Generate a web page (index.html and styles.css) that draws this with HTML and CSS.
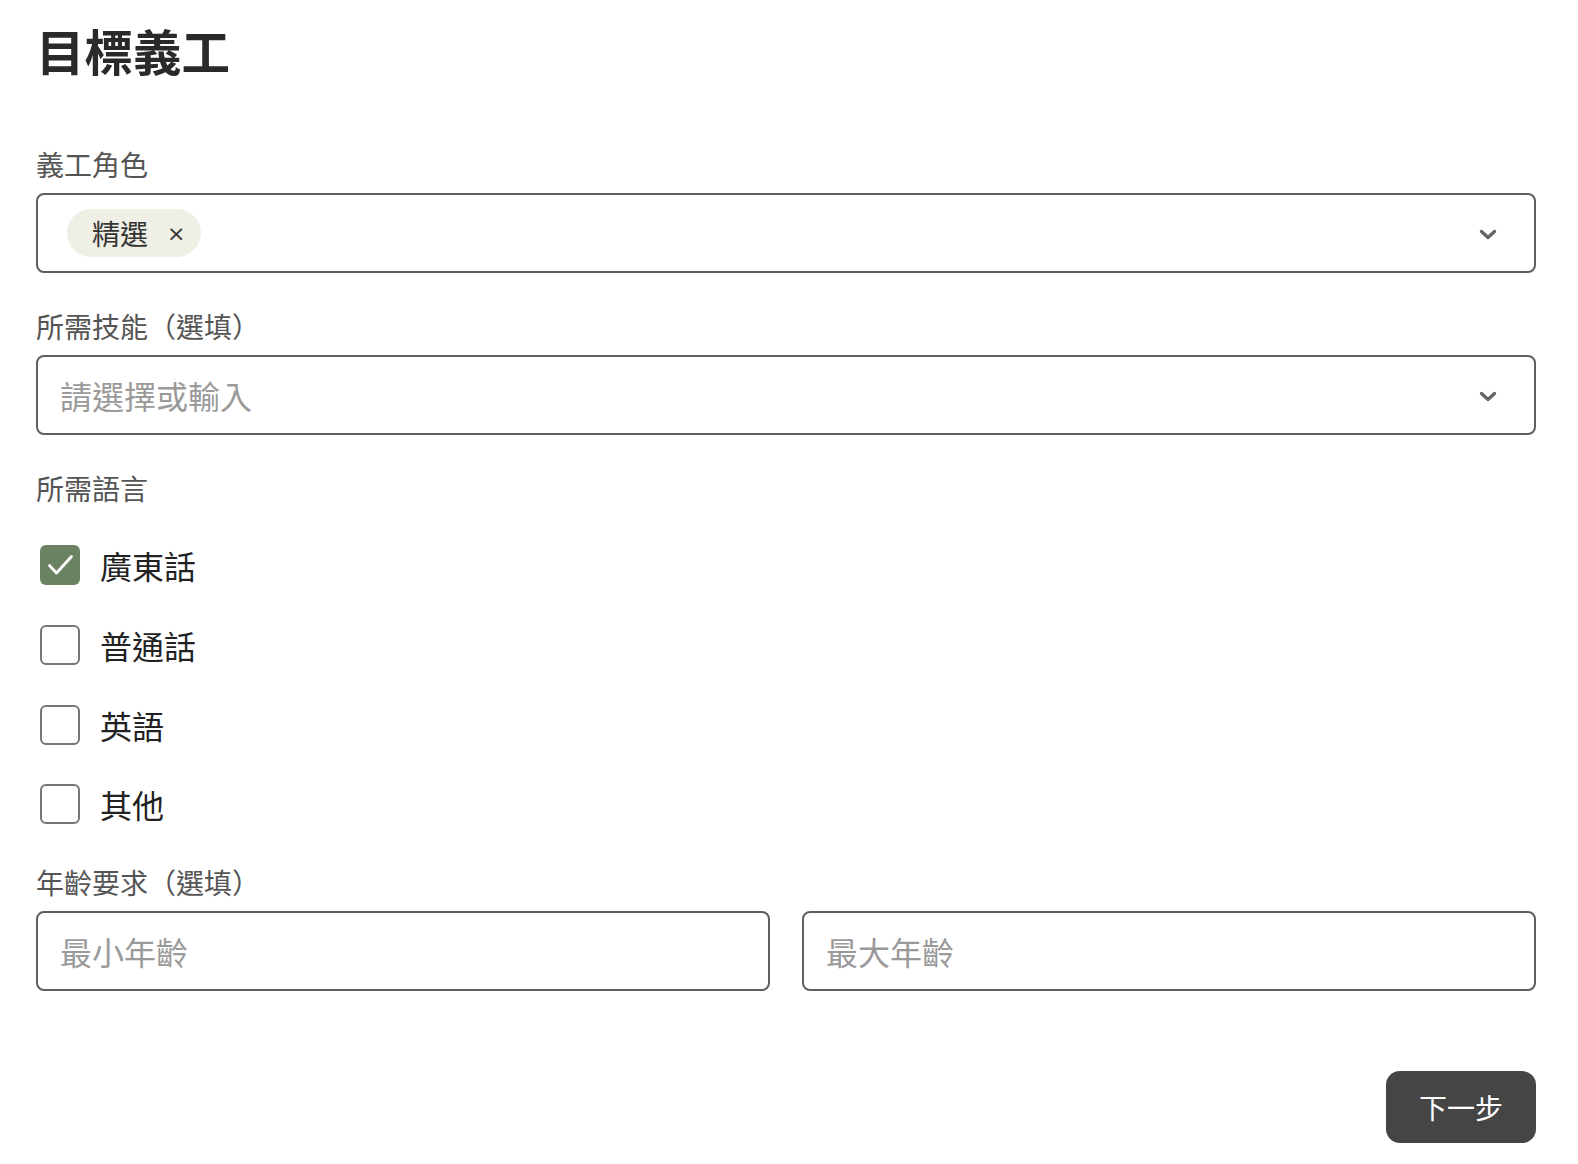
FILE: index.html
```html
<!DOCTYPE html>
<html lang="zh-Hant">
<head>
<meta charset="utf-8">
<title>目標義工</title>
<link rel="stylesheet" href="styles.css">
</head>
<body>
<main class="page">
  <h1 class="title">目標義工</h1>

  <section class="field first">
    <div class="label">義工角色</div>
    <div class="select">
      <div class="select-value">
        <span class="chip"><span class="chip-text">精選</span><span class="chip-x">×</span></span>
      </div>
      <svg class="chevron" viewBox="0 0 18 11" width="18" height="11"><path d="M2.5 2.5 L9 8.5 L15.5 2.5" fill="none" stroke="#666" stroke-width="3.4" stroke-linecap="round" stroke-linejoin="round"/></svg>
    </div>
  </section>

  <section class="field">
    <div class="label">所需技能（選填）</div>
    <div class="select">
      <div class="select-value placeholder">請選擇或輸入</div>
      <svg class="chevron" viewBox="0 0 18 11" width="18" height="11"><path d="M2.5 2.5 L9 8.5 L15.5 2.5" fill="none" stroke="#666" stroke-width="3.4" stroke-linecap="round" stroke-linejoin="round"/></svg>
    </div>
  </section>

  <section class="field">
    <div class="label">所需語言</div>
    <div class="checks">
      <label class="check">
        <span class="box checked"><svg viewBox="0 0 40 40" width="40" height="40"><path d="M9.5 20.5 L16.5 28 L31.5 11.5" fill="none" stroke="#fff" stroke-width="2.8" stroke-linecap="round" stroke-linejoin="round"/></svg></span>
        <span class="check-text">廣東話</span>
      </label>
      <label class="check"><span class="box"></span><span class="check-text">普通話</span></label>
      <label class="check"><span class="box"></span><span class="check-text">英語</span></label>
      <label class="check"><span class="box"></span><span class="check-text">其他</span></label>
    </div>
  </section>

  <section class="field age">
    <div class="label">年齡要求（選填）</div>
    <div class="age-row">
      <div class="input placeholder">最小年齡</div>
      <div class="input placeholder">最大年齡</div>
    </div>
  </section>

  <div class="actions">
    <button class="next">下一步</button>
  </div>
</main>
</body>
</html>
```

FILE: styles.css
```css
html, body {
  margin: 0;
  padding: 0;
  background: #ffffff;
}

body {
  font-family: "Noto Sans CJK TC", "Noto Sans", sans-serif;
  color: #222;
}

.page {
  padding: 20px 42px 0 36px;
}

.title {
  margin: 0;
  font-size: 48.5px;
  line-height: 60px;
  font-weight: 700;
  color: #2a2a2a;
}

.field {
  margin-top: 33px;
}

.field.first {
  margin-top: 64px;
}

.label {
  font-size: 28px;
  line-height: 40px;
  color: #555;
  margin-bottom: 9px;
}

.select {
  height: 80px;
  box-sizing: border-box;
  border: 2px solid #5f5f5f;
  border-radius: 8px;
  display: flex;
  align-items: center;
  justify-content: space-between;
  padding: 0 37px 0 22px;
}

.select-value {
  font-size: 32px;
  display: flex;
  align-items: center;
}

.placeholder {
  color: #9a9a9a;
}

.chip {
  margin-left: 7px;
  height: 48px;
  border-radius: 24px;
  background: #efefe6;
  display: inline-flex;
  align-items: center;
  padding: 0 16px 0 25px;
}

.chip-text {
  font-size: 28px;
  color: #333;
}

.chip-x {
  font-family: "DejaVu Sans", sans-serif;
  font-size: 22px;
  color: #333;
  margin-left: 19px;
}

.chevron {
  display: block;
  margin-top: 3px;
}

.checks {
  margin-top: 37px;
  display: flex;
  flex-direction: column;
  gap: 39.8px;
  padding-left: 4px;
}

.check {
  display: flex;
  align-items: center;
  height: 40px;
}

.box {
  width: 40px;
  height: 40px;
  box-sizing: border-box;
  border: 2px solid #777;
  border-radius: 6px;
  display: flex;
  align-items: center;
  justify-content: center;
  background: #fff;
  flex: none;
}

.box.checked {
  background: #6a8262;
  border: none;
}

.box.checked svg {
  display: block;
}

.check-text {
  margin-left: 20px;
  font-size: 32px;
  color: #222;
}

.field.age {
  margin-top: 38px;
}

.age-row {
  display: grid;
  grid-template-columns: 1fr 1fr;
  gap: 32px;
}

.input {
  height: 80px;
  box-sizing: border-box;
  border: 2px solid #5f5f5f;
  border-radius: 8px;
  display: flex;
  align-items: center;
  padding: 0 22px;
  font-size: 32px;
}

.actions {
  display: flex;
  justify-content: flex-end;
  margin-top: 80px;
}

.next {
  font-family: "Noto Sans CJK TC", "Noto Sans", sans-serif;
  width: 150px;
  height: 72px;
  border: none;
  border-radius: 14px;
  background: #454545;
  color: #fff;
  font-size: 28px;
  padding: 0;
}
```
